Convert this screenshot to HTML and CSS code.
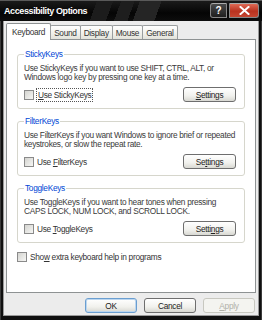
FILE: index.html
```html
<!DOCTYPE html>
<html>
<head>
<meta charset="utf-8">
<link rel="stylesheet" href="styles.css">
</head>
<body>
<div class="window">
  <div class="titlebar">
    <span class="title">Accessibility Options</span>
    <div class="caption-btns">
      <span class="cbtn help">?</span>
      <span class="cbtn close">
        <svg width="11" height="9" viewBox="0 0 11 9"><path d="M1.5 1 L9.5 8 M9.5 1 L1.5 8" stroke="#fff" stroke-width="2" stroke-linecap="square"/></svg>
      </span>
    </div>
  </div>
  <div class="client">
    <div class="tabs">
      <span class="tab active">Keyboard</span>
      <span class="tab">Sound</span>
      <span class="tab">Display</span>
      <span class="tab">Mouse</span>
      <span class="tab">General</span>
    </div>
    <div class="panel">
      <fieldset class="group">
        <legend>StickyKeys</legend>
        <p class="desc">Use StickyKeys if you want to use SHIFT, CTRL, ALT, or<br>Windows logo key by pressing one key at a time.</p>
        <div class="row">
          <label class="check"><span class="box"></span><span class="focus"><u>U</u>se StickyKeys</span></label>
          <button class="btn"><u>S</u>ettings</button>
        </div>
      </fieldset>
      <fieldset class="group">
        <legend>FilterKeys</legend>
        <p class="desc">Use FilterKeys if you want Windows to ignore brief or repeated<br>keystrokes, or slow the repeat rate.</p>
        <div class="row">
          <label class="check"><span class="box"></span><span>Use <u>F</u>ilterKeys</span></label>
          <button class="btn">Se<u>t</u>tings</button>
        </div>
      </fieldset>
      <fieldset class="group">
        <legend>ToggleKeys</legend>
        <p class="desc">Use ToggleKeys if you want to hear tones when pressing<br>CAPS LOCK, NUM LOCK, and SCROLL LOCK.</p>
        <div class="row">
          <label class="check"><span class="box"></span><span>Use <u>T</u>oggleKeys</span></label>
          <button class="btn">Setti<u>n</u>gs</button>
        </div>
      </fieldset>
      <label class="check extra"><span class="box"></span><span>Sho<u>w</u> extra keyboard help in programs</span></label>
    </div>
    <div class="footer">
      <button class="btn dlg default">OK</button>
      <button class="btn dlg">Cancel</button>
      <button class="btn dlg disabled"><u>A</u>pply</button>
    </div>
  </div>
</div>
</body>
</html>
```
FILE: styles.css
```css
* { box-sizing: border-box; }
html, body { margin: 0; padding: 0; }
body {
  width: 262px;
  height: 320px;
  background: #0c0c0c;
  font-family: "Liberation Sans", Arial, sans-serif;
  font-size: 8.3px;
  letter-spacing: -0.3px;
  color: #222;
  overflow: hidden;
}
.window {
  width: 262px;
  height: 320px;
  display: flex;
  flex-direction: column;
  background: #101010;
  border-top: 1px solid #5a5a5a;
  padding: 0 3px 4px 3px;
  box-shadow: inset 1px 0 0 #3a3a3a, inset -1px 0 0 #3a3a3a;
}
.titlebar {
  height: 20px;
  margin: 0 -3px;
  padding: 0 3px 0 4px;
  display: flex;
  align-items: center;
  justify-content: space-between;
  background:
    linear-gradient(110deg, transparent 0 36%, #1c1c1c 36% 42%, transparent 42% 45%, #1e1e1e 45% 50%, transparent 50% 52%, #252525 52% 60%, transparent 60%),
    linear-gradient(#1a1a1a, #050505 60%, #0d0d0d);
}
.title {
  color: #fff;
  font-weight: bold;
  font-size: 9px;
  letter-spacing: -0.4px;
}
.caption-btns {
  display: flex;
  gap: 2px;
  align-self: flex-start;
  margin-top: 2px;
}
.cbtn {
  height: 15px;
  display: flex;
  align-items: center;
  justify-content: center;
  color: #fff;
  font-weight: bold;
  font-size: 10px;
  border: 1px solid #888;
  border-top-color: #aaa;
}
.help {
  width: 17px;
  border-radius: 3px 0 0 3px;
  background: linear-gradient(#4a4a4a, #1e1e1e);
}
.close {
  width: 30px;
  border-radius: 0 3px 3px 0;
  background: linear-gradient(#e06a55, #b8321f 55%, #c44530);
}
.client {
  flex: 1;
  background: #ececec;
  padding: 2px 2px 0 2px;
  display: flex;
  flex-direction: column;
  border-left: 1px solid #9a9a9a;
  border-right: 1px solid #9a9a9a;
  border-bottom: 1px solid #9a9a9a;
}
.tabs {
  display: flex;
  align-items: flex-end;
  height: 16px;
  padding-left: 1px;
  position: relative;
  z-index: 1;
}
.tab {
  height: 14px;
  padding: 0 3px;
  display: flex;
  align-items: center;
  border: 1px solid #9a9e9f;
  border-bottom: none;
  border-radius: 2px 2px 0 0;
  background: linear-gradient(#ffffff, #f0f0ea 60%, #e2e2da);
  margin-right: -1px;
  color: #333;
}
.tab.active {
  height: 17px;
  margin-bottom: -1px;
  background: #fff;
  padding: 0 5px;
  border-color: #8e9293;
  margin-left: -1px;
}
.panel {
  height: 254px;
  background: #fff;
  border: 1px solid #8e9293;
  padding: 9px 10px 0 10px;
  display: flex;
  flex-direction: column;
  gap: 7px;
}
.group {
  margin: 0;
  border: 1px solid #d6d6cc;
  border-radius: 3px;
  padding: 5px 8px 7px 6px;
  min-width: 0;
  height: 60px;
}
.group legend {
  color: #0046d5;
  padding: 0 1px;
  margin-left: 0;
  line-height: 10px;
}
.desc {
  margin: 0 -6px 5px 0;
  line-height: 9px;
  color: #3a3a3a;
  white-space: nowrap;
}
.row {
  display: flex;
  align-items: center;
  justify-content: space-between;
}
.check {
  display: flex;
  align-items: center;
  gap: 2px;
  color: #333;
}
.box {
  width: 10px;
  height: 10px;
  border: 1px solid #8a8a8a;
  background: linear-gradient(135deg, #d4d4d0, #f6f6f4);
  margin-right: 1px;
}
.focus {
  outline: 1px dotted #555;
  padding: 1px 1px;
}
.btn {
  width: 53px;
  height: 15px;
  padding: 0;
  font: inherit;
  letter-spacing: inherit;
  color: #222;
  border: 1px solid #6e6e6e;
  border-radius: 3px;
  background: linear-gradient(#ffffff, #f1f1ed 60%, #d8d8d2);
}
.extra {
  margin-top: 2px;
}
.footer {
  display: flex;
  justify-content: flex-end;
  gap: 7px;
  padding: 5px 1px 0 0;
}
.btn.dlg {
  width: 52px;
}
.btn.default {
  border-color: #6a9ed0;
  box-shadow: inset 0 0 0 1px #bcd6ef;
}
.btn.disabled {
  color: #b0b0a8;
  border-color: #c8c8c0;
  background: #f4f4f0;
}
u { text-decoration-thickness: 1px; }
```
